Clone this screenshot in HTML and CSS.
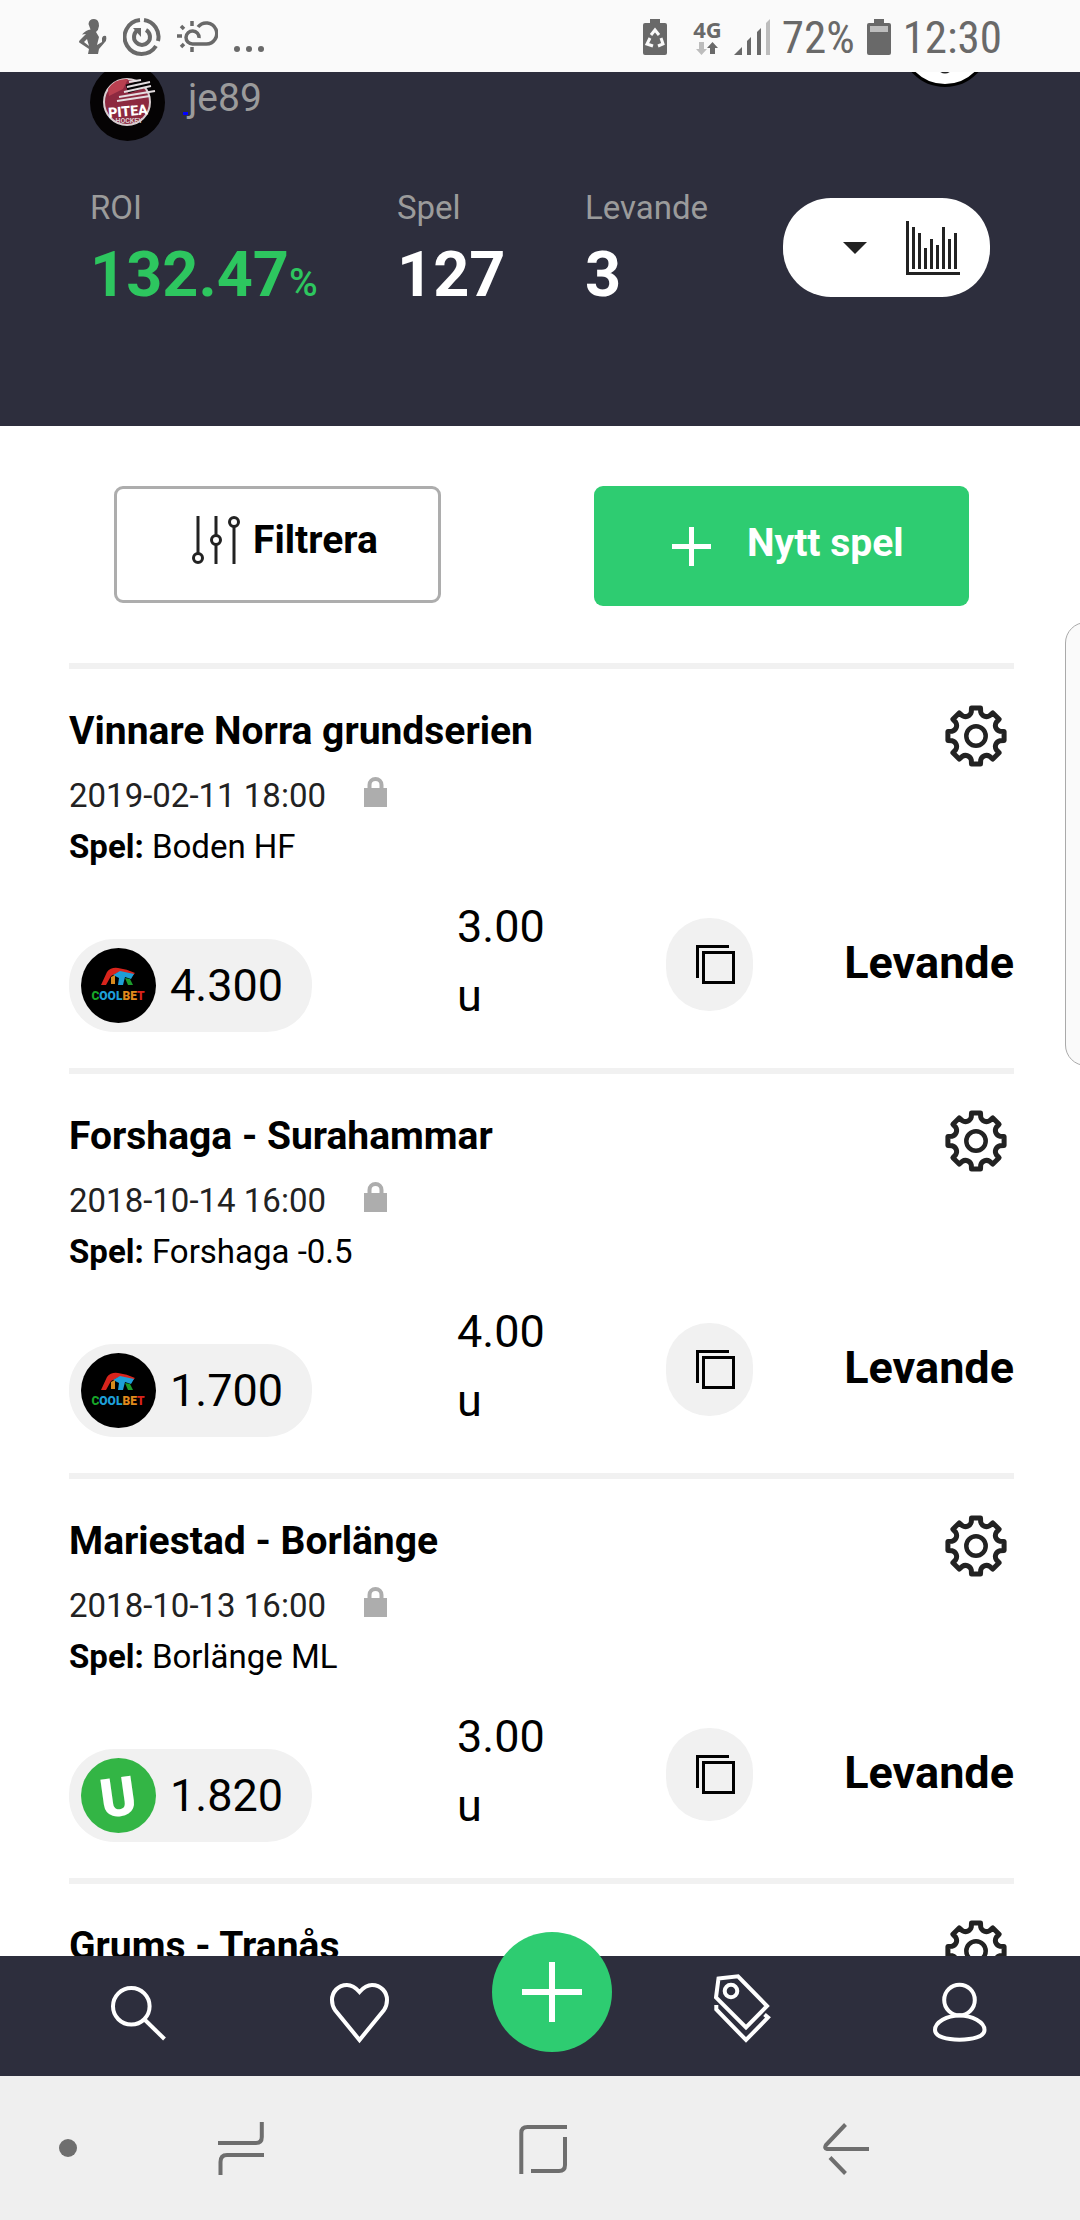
FILE: index.html
```html
<!DOCTYPE html>
<html lang="sv">
<head>
<meta charset="utf-8">
<meta name="viewport" content="width=device-width, initial-scale=1">
<title>Mina spel</title>
<link rel="stylesheet" href="styles.css">
</head>
<body>
<svg class="defs" aria-hidden="true">
  <symbol id="gear" viewBox="-31 -31 62 62">
    <path fill="none" stroke="#222" stroke-width="5" stroke-linejoin="round" d="M-4.5-28.1H4.5L4.7-24A6 6 0 0 0 13.7-20.3L16.8-23.1 23.1-16.8 20.3-13.7A6 6 0 0 0 24-4.7L28.1-4.5V4.5L24 4.7A6 6 0 0 0 20.3 13.7L23.1 16.8 16.8 23.1 13.7 20.3A6 6 0 0 0 4.7 24L4.5 28.1H-4.5L-4.7 24A6 6 0 0 0-13.7 20.3L-16.8 23.1-23.1 16.8-20.3 13.7A6 6 0 0 0-24 4.7L-28.1 4.5V-4.5L-24-4.7A6 6 0 0 0-20.3-13.7L-23.1-16.8-16.8-23.1-13.7-20.3A6 6 0 0 0-4.7-24Z"/>
    <circle r="9.7" fill="none" stroke="#222" stroke-width="4.5"/>
  </symbol>
  <symbol id="lock" viewBox="0 0 23 30">
    <path fill="#adadad" d="M0 11H3.5V8A8 8 0 0 1 19.500 8V11H23V30H0ZM7.500 11H15.500V8A4 4 0 0 0 7.500 8Z"/>
  </symbol>
  <symbol id="copy" viewBox="0 0 39 39">
    <path fill="none" stroke="#000" stroke-width="3" d="M33 1.500H1.500V33M7.500 7.500H37.500V37.500H7.500Z"/>
  </symbol>
  <symbol id="coolbet" viewBox="0 0 75 75">
    <circle cx="37.500" cy="37.500" r="37.500" fill="#000"/>
    <path fill="#d8241c" d="M20 37L26 24Q30 19 37 20Q46 21 54 25L51 28L38 24L30 28L25 37Z"/>
    <path fill="#1e9fd8" d="M32 27L39 23L53 26L50 31L44 29L42 37H37L38 30Z"/>
    <path fill="#d88a1c" d="M30 29L34 27V36H30Z"/>
    <path fill="#1c9c2c" d="M44 30L49 31L52 37H47Z"/>
  </symbol>
</svg>

<div class="status-bar">
  <div class="status-group">
    <svg width="28" height="36" viewBox="79 20 28 36" fill="#696969"><path d="M88.500 25Q89 20 94 20Q99 20 99 27Q98.500 31 96 33L99 38L97 46L102 43V39Q103 36 106 37Q107 41 105 43L99 50L98 55H88L89 50L80 44Q78 43 80 41L86 35L82 35.500Q86 31 90.500 30.500ZM87 40L84 43L89 47Z"/></svg>
    <svg width="38" height="38" viewBox="128 18 38 38" fill="none" stroke="#696969"><path stroke-width="4" d="M145 20A17 17 0 1 0 161 46M149 20A17 17 0 0 1 163 41"/><path stroke-width="4" d="M151 30A8 8 0 1 1 143 30"/><path fill="#696969" stroke="none" d="M138 28H146V37Z"/></svg>
    <svg width="41" height="32" viewBox="181 22 41 32" fill="none" stroke="#696969" stroke-width="3.500"><path d="M203 39A6.500 6.500 0 1 0 196.500 45H210A10.500 10.500 0 1 0 202 28M196 22V27M196 48V53M181 37H186M185 27L188 30M185 48L188 45"/></svg>
    <svg width="30" height="34" viewBox="238 22 30 34" fill="#696969"><circle cx="241" cy="51" r="3"/><circle cx="253" cy="51" r="3"/><circle cx="265" cy="51" r="3"/></svg>
  </div>
  <div class="status-group status-right">
    <svg class="saver" width="24" height="36" viewBox="0 0 24 36"><path fill="#696969" d="M7 0H17V4H22Q24 4 24 6V34Q24 36 22 36H2Q0 36 0 34V6Q0 4 2 4H7Z"/><path fill="none" stroke="#fafafa" stroke-width="3" d="M8 16L12 11L16 16M18 19L20 25L15 27M10 27L4 25L7 19"/></svg>
    <div class="network"><span>4G</span><svg width="22" height="13" viewBox="0 0 22 13"><path fill="#bdbdbd" d="M3 0H8V7H11L5.500 13L0 7H3Z"/><path fill="#696969" d="M16.500 0L22 6H19V12H14V6H11Z"/></svg></div>
    <svg width="36" height="36" viewBox="0 0 36 36" fill="#696969"><path d="M0 36L8 28V36ZM13 22L17 18V36H13ZM23 13L27 9V36H23Z"/><path fill="#bdbdbd" d="M32 4L36 0V36H32Z"/></svg>
    <span class="status-text">72%</span>
    <svg width="24" height="36" viewBox="0 0 24 36"><path fill="#696969" d="M7 0H17V4H22Q24 4 24 6V34Q24 36 22 36H2Q0 36 0 34V6Q0 4 2 4H7Z"/><path fill="#bdbdbd" d="M3 7H21V13H3Z"/></svg>
    <span class="status-text">12:30</span>
  </div>
</div>

<main class="screen">
  <header class="header">
    <div class="profile">
      <svg class="avatar" viewBox="0 0 75 77" role="img" aria-label="Piteå Hockey">
        <ellipse cx="37.500" cy="38.500" rx="37.500" ry="38.500" fill="#050304"/>
        <circle cx="37" cy="38" r="23" fill="#8d2940" stroke="#d8cdd0" stroke-width="2"/>
        <path fill="#b94050" d="M18 25Q25 14 38 15L33 25L19 32Z"/>
        <path stroke="#050304" stroke-width="9" d="M37 25L62 17"/>
        <path stroke="#e4dde0" stroke-width="2" d="M39 18L51 16M37 23L60 18M34 28L61 22M29 33L65 27M27 37L60 32"/>
        <text class="crest-name" x="38" y="52" text-anchor="middle" transform="rotate(-5 38 48)">PITEA</text>
        <text class="crest-sub" x="39" y="59" text-anchor="middle">HOCKEY</text>
      </svg>
      <a class="username" href="#profil">je89</a>
      <button class="round-button" type="button" aria-label="Inställningar"><svg width="12" height="12" viewBox="0 0 12 12"><path fill="none" stroke="#222" stroke-width="3" d="M0 6Q6 12 12 6"/></svg></button>
    </div>
    <div class="stats">
      <div><div class="stat-label">ROI</div><div class="stat-value positive">132.47<span class="percent">%</span></div></div>
      <div><div class="stat-label">Spel</div><div class="stat-value">127</div></div>
      <div><div class="stat-label">Levande</div><div class="stat-value">3</div></div>
      <button class="chart-button" type="button" aria-label="Visa diagram">
        <svg width="24" height="12" viewBox="0 0 24 12"><path fill="#222" d="M0 0H24L12 12Z"/></svg>
        <svg width="54" height="54" viewBox="0 0 54 54"><path fill="#222" d="M0 0H3V51H54V54H0ZM6 6H9V48H6ZM12 12H15V48H12ZM18 27H21V48H18ZM24 18H27V48H24ZM30 24H33V48H30ZM36 6H39V48H36ZM42 18H45V48H42ZM48 12H51V48H48Z"/></svg>
      </button>
    </div>
  </header>

  <div class="actions">
    <button class="filter-button" type="button">
      <svg width="48" height="48" viewBox="0 0 48 48" fill="none" stroke="#222" stroke-width="3"><path d="M6 0V37M24 0V19M24 29V48M42 11V48"/><circle cx="6" cy="42" r="4.500"/><circle cx="24" cy="24" r="4.500"/><circle cx="42" cy="6" r="4.500"/></svg>
      Filtrera
    </button>
    <button class="new-button" type="button">
      <svg width="39" height="39" viewBox="0 0 39 39"><path fill="none" stroke="#fff" stroke-width="5" d="M0 19.500H39M19.500 0V39"/></svg>
      <span>Nytt spel</span>
    </button>
  </div>

  <div class="bets">
    <article class="bet">
      <div class="bet-head">
        <h2>Vinnare Norra grundserien</h2>
        <button class="plain gear" type="button" aria-label="Inställningar"><svg><use href="#gear"/></svg></button>
      </div>
      <div class="date">2019-02-11 18:00 <svg class="lock"><use href="#lock"/></svg></div>
      <div class="pick"><b>Spel:</b> Boden HF</div>
      <div class="bet-row">
        <div class="odds"><svg class="book" viewBox="0 0 75 75"><use href="#coolbet"/><text class="coolbet-text" x="37" y="52" text-anchor="middle"><tspan fill="#18a428">C</tspan><tspan fill="#1e9fd8">OOL</tspan><tspan fill="#e08a1c">BE</tspan><tspan fill="#d8241c">T</tspan></text></svg>4.300</div>
        <div class="stake"><span>3.00</span><span>u</span></div>
        <div class="outcome"><button class="copy" type="button" aria-label="Kopiera"><svg><use href="#copy"/></svg></button><strong>Levande</strong></div>
      </div>
    </article>
    <article class="bet">
      <div class="bet-head">
        <h2>Forshaga - Surahammar</h2>
        <button class="plain gear" type="button" aria-label="Inställningar"><svg><use href="#gear"/></svg></button>
      </div>
      <div class="date">2018-10-14 16:00 <svg class="lock"><use href="#lock"/></svg></div>
      <div class="pick"><b>Spel:</b> Forshaga -0.5</div>
      <div class="bet-row">
        <div class="odds"><svg class="book" viewBox="0 0 75 75"><use href="#coolbet"/><text class="coolbet-text" x="37" y="52" text-anchor="middle"><tspan fill="#18a428">C</tspan><tspan fill="#1e9fd8">OOL</tspan><tspan fill="#e08a1c">BE</tspan><tspan fill="#d8241c">T</tspan></text></svg>1.700</div>
        <div class="stake"><span>4.00</span><span>u</span></div>
        <div class="outcome"><button class="copy" type="button" aria-label="Kopiera"><svg><use href="#copy"/></svg></button><strong>Levande</strong></div>
      </div>
    </article>
    <article class="bet">
      <div class="bet-head">
        <h2>Mariestad - Borlänge</h2>
        <button class="plain gear" type="button" aria-label="Inställningar"><svg><use href="#gear"/></svg></button>
      </div>
      <div class="date">2018-10-13 16:00 <svg class="lock"><use href="#lock"/></svg></div>
      <div class="pick"><b>Spel:</b> Borlänge ML</div>
      <div class="bet-row">
        <div class="odds"><svg class="book" viewBox="0 0 75 75"><circle cx="37.500" cy="37.500" r="37.500" fill="#33b545"/><text class="unibet-text" x="37" y="58" text-anchor="middle" transform="rotate(-8 37 38)">U</text></svg>1.820</div>
        <div class="stake"><span>3.00</span><span>u</span></div>
        <div class="outcome"><button class="copy" type="button" aria-label="Kopiera"><svg><use href="#copy"/></svg></button><strong>Levande</strong></div>
      </div>
    </article>
    <article class="bet">
      <div class="bet-head">
        <h2>Grums - Tranås</h2>
        <button class="plain gear" type="button" aria-label="Inställningar"><svg><use href="#gear"/></svg></button>
      </div>
    </article>
  </div>
</main>

<nav class="tabs" aria-label="Huvudmeny">
  <a href="#sok" aria-label="Sök"><svg width="60" height="72" viewBox="108 1974 60 72"><circle cx="131.300" cy="2006.300" r="18.300"/><path d="M144.500 2019.500L164.500 2039"/></svg></a>
  <a href="#favoriter" aria-label="Favoriter"><svg width="60" height="72" viewBox="330 1974 60 72"><path d="M359.500 1992C356 1988 352 1985 347 1985C338 1985 332 1992 332 2000C332 2004 333 2007 335 2010L359.500 2040L384 2010C386 2007 387 2004 387 2000C387 1992 381 1985 372 1985C367 1985 363 1988 359.500 1992Z"/></svg></a>
  <button class="fab" type="button" aria-label="Nytt spel"><svg width="60" height="60" viewBox="0 0 60 60"><path stroke-width="6" d="M0 30H60M30 0V60"/></svg></button>
  <a href="#taggar" aria-label="Taggar"><svg width="60" height="72" viewBox="714 1974 60 72"><path d="M718.500 1978.500L738 1976.300L767 2006L746 2027.300L716 1997.500ZM716.300 2005V2009.500L746 2040L768 2017.500L764.500 2014.500"/><circle cx="731" cy="1991" r="6.300"/></svg></a>
  <a href="#profil" aria-label="Profil"><svg width="60" height="72" viewBox="933 1974 60 72"><circle cx="959.500" cy="2000" r="15.300"/><path d="M935 2030C935 2022 947 2015.500 959.500 2015.500S984.500 2022 984.500 2030C984.500 2037 972 2039.700 959.500 2039.700S935 2037 935 2030Z"/></svg></a>
</nav>

<div class="system-nav">
  <svg width="18" height="54" viewBox="59 2121 18 54"><circle cx="68" cy="2148" r="9" fill="#6e6e6e"/></svg>
  <button class="plain" type="button" aria-label="Senaste"><svg width="48" height="54" viewBox="218 2122 48 54"><path d="M261.800 2123V2138Q261.800 2144 256 2144H218M264 2156H227Q220.500 2156 220.500 2163V2176"/></svg></button>
  <button class="plain" type="button" aria-label="Hem"><svg width="48" height="54" viewBox="519 2122 48 54"><path d="M521.300 2175V2134Q521.300 2128 527.500 2128H567M565 2138V2166Q565 2172 559 2172H531"/></svg></button>
  <button class="plain" type="button" aria-label="Tillbaka"><svg width="48" height="54" viewBox="823 2122 48 54"><path d="M845.500 2125.500L826 2146Q824 2149.500 827 2150H869M830 2158.500L845.500 2174.500"/></svg></button>
</div>

<div class="edge-handle"></div>
</body>
</html>
```
FILE: styles.css
```css
* {
  box-sizing: border-box;
}

body {
  position: relative;
  display: flex;
  flex-direction: column;
  height: 100vh;
  margin: 0;
  overflow: hidden;
  background: #fff;
  color: #000;
  font-family: Roboto, "Liberation Sans", sans-serif;
  font-size: 33px;
}

button {
  padding: 0;
  border: 0;
  font: inherit;
  color: inherit;
}

svg {
  display: block;
  flex: none;
}

.defs {
  position: absolute;
  width: 0;
  height: 0;
}

.plain {
  background: none;
}

/* Status bar */
.status-bar {
  display: flex;
  flex: none;
  justify-content: space-between;
  height: 72px;
  padding: 2px 78px 0 79px;
  background: #fafafa;
  color: #696969;
}

.status-group {
  display: flex;
  align-items: center;
  gap: 16px;
}

.status-right {
  gap: 12px;
}

.saver {
  margin-right: 14px;
}

.network {
  display: flex;
  flex-direction: column;
  align-items: center;
  gap: 3px;
  font: 700 22px/20px "Noto Sans", sans-serif;
}

.status-text {
  font-family: "Roboto Condensed", Roboto, sans-serif;
  font-size: 45px;
}

/* Header */
.screen {
  flex: 1;
  min-height: 0;
  overflow: hidden;
}

.header {
  padding: 0 90px 111px;
  overflow: hidden;
  background: #2d2e3d;
  color: #fff;
}

.profile {
  display: flex;
  align-items: flex-end;
  height: 144px;
  margin-top: -75px;
}

.avatar {
  width: 75px;
  height: 77px;
}

.crest-name {
  fill: #fff;
  font: 900 14px Roboto, sans-serif;
}

.crest-sub {
  fill: #d8cdd0;
  font: 700 7px Roboto, sans-serif;
}

.username {
  display: flex;
  align-items: flex-end;
  margin: 0 auto 19px 18px;
  color: #9b9b9b;
  font-size: 39px;
  line-height: 48px;
  text-decoration: none;
}

.username::before {
  width: 5px;
  height: 3px;
  margin-bottom: 7px;
  background: #00f;
  content: "";
}

.round-button {
  display: flex;
  align-items: flex-end;
  justify-content: center;
  align-self: flex-start;
  width: 90px;
  height: 90px;
  padding-bottom: 9px;
  border: 3px solid #000;
  border-radius: 50%;
  background: #fff;
}

.stats {
  display: grid;
  grid-template-columns: 307fr 188fr 198fr 207px;
  margin-top: 40px;
}

.stat-label {
  color: #9b9b9b;
  line-height: 54px;
}

.stat-value {
  font-size: 63px;
  font-weight: 700;
  line-height: 80px;
}

.positive {
  color: #2dc65f;
}

.percent {
  font-size: 39px;
  font-weight: 500;
  line-height: 1;
}

.chart-button {
  display: flex;
  align-items: center;
  justify-content: flex-end;
  gap: 39px;
  height: 99px;
  margin-top: 17px;
  padding-right: 30px;
  border-radius: 48px;
  background: #fff;
}

/* Actions */
.actions {
  display: flex;
  justify-content: space-between;
  align-items: flex-start;
  padding: 60px 111px 57px 114px;
  font-size: 39px;
  font-weight: 700;
}

.filter-button {
  display: flex;
  align-items: center;
  gap: 13px;
  width: 327px;
  height: 117px;
  padding: 0 0 10px 75px;
  border: 3px solid #adadad;
  border-radius: 9px;
  background: #fff;
}

.new-button {
  display: flex;
  align-items: center;
  gap: 36px;
  width: 375px;
  height: 120px;
  padding-left: 78px;
  border-radius: 9px;
  background: #2ecc71;
  color: #fff;
}

.new-button span {
  padding-bottom: 6px;
}

/* Bets */
.bets {
  padding: 0 66px 0 69px;
}

.bet {
  padding: 36px 0;
  border-top: 6px solid #f1f1f1;
}

.bet-head {
  display: flex;
  align-items: flex-start;
  justify-content: space-between;
  height: 65px;
  padding-right: 7px;
}

.bet h2 {
  margin: 0;
  padding-top: 2px;
  font-size: 39px;
  font-weight: 700;
  line-height: 48px;
}

.gear svg {
  width: 62px;
  height: 62px;
}

.date {
  display: flex;
  gap: 38px;
  color: #222;
  line-height: 51px;
}

.lock {
  width: 23px;
  height: 30px;
  margin-top: 7px;
}

.pick {
  line-height: 51px;
}

.bet-row {
  display: grid;
  grid-template-columns: 388fr 209fr 348fr;
  align-items: end;
  margin-top: 20px;
  font-size: 45px;
}

.odds {
  display: flex;
  align-items: center;
  gap: 14px;
  width: 243px;
  height: 93px;
  padding-left: 12px;
  border-radius: 45px;
  background: #f1f1f1;
}

.book {
  width: 75px;
  height: 75px;
}

.coolbet-text {
  font: 900 12px Roboto, sans-serif;
}

.unibet-text {
  fill: #fff;
  font: 900 54px Roboto, sans-serif;
}

.stake {
  display: flex;
  flex-direction: column;
  height: 140px;
  line-height: 69px;
}

.outcome {
  display: flex;
  align-items: center;
  justify-content: space-between;
  height: 93px;
  margin-bottom: 21px;
}

.outcome strong {
  padding-bottom: 4px;
}

.copy {
  display: flex;
  align-items: center;
  justify-content: center;
  width: 87px;
  height: 93px;
  padding-left: 12px;
  border-radius: 43px;
  background: #f1f1f1;
}

.copy svg {
  width: 39px;
  height: 39px;
}

/* Bottom tabs */
.tabs {
  z-index: 1;
  display: grid;
  flex: none;
  grid-template-columns: 222fr 162fr 222fr 219fr 60px;
  align-items: center;
  height: 120px;
  padding: 0 87px 12px 108px;
  background: #2d2e3d;
}

.tabs a {
  width: 60px;
}

.tabs svg {
  fill: none;
  stroke: #fff;
  stroke-width: 4;
}

.fab {
  display: flex;
  align-items: center;
  justify-content: center;
  width: 120px;
  height: 120px;
  margin: -24px 0 -12px;
  border-radius: 50%;
  background: #2ecc71;
  align-self: start;
}

/* System navigation */
.system-nav {
  display: grid;
  flex: none;
  grid-template-columns: 159fr 301fr 304fr 257fr;
  align-items: center;
  justify-items: start;
  height: 144px;
  padding-left: 59px;
  background: #efefef;
}

.system-nav .plain svg {
  fill: none;
  stroke: #6e6e6e;
  stroke-width: 4;
}

/* Pull-out panel grip, partly beyond the screen edge */
.edge-handle {
  position: absolute;
  top: 622px;
  right: -9px;
  width: 24px;
  height: 444px;
  border: 1px solid #aaa;
  border-radius: 21px 0 0 21px;
  background: #fafafa;
}
```
